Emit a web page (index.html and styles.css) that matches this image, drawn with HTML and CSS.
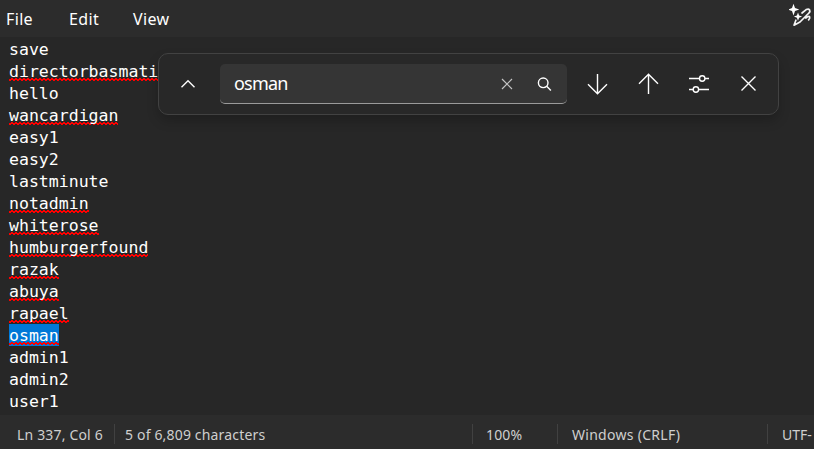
FILE: index.html
```html
<!DOCTYPE html>
<html lang="en">
<head>
<meta charset="utf-8">
<title>Notepad</title>
<link rel="stylesheet" href="styles.css">
</head>
<body>
<div class="window">
  <header class="menubar">
    <nav class="menus"><span class="menu file">File</span><span class="menu edit">Edit</span><span class="menu view">View</span></nav>
    <svg class="rewrite" width="24" height="28" viewBox="0 0 24 28" fill="none" stroke="#f4f4f4" stroke-width="1.7" stroke-linecap="round" stroke-linejoin="round">
      <path fill="#fff" stroke="none" d="M4.500 3.800l1.500 4.300 4.300 1.500-4.300 1.500-1.500 4.300-1.500-4.300-4.300-1.500 4.300-1.500zM9 12.500l1.100 3 3 1.100-3 1.100-1.100 3-1.100-3-3-1.100 3-1.100z"/>
      <path d="M13 13L17.200 9.600q2.400-1.100 3.400.3.900 1.700-.7 3.100L11 22l-6 3.200 1.900-5M16.800 18q3-2.200 3.800-1.300.7 1.200-1 3.200"/>
    </svg>
  </header>
  <main class="editor">
    <div class="line"><span>save</span></div>
    <div class="line"><span class="typo">directorbasmati</span></div>
    <div class="line"><span>hello</span></div>
    <div class="line"><span class="typo">wancardigan</span></div>
    <div class="line"><span>easy1</span></div>
    <div class="line"><span>easy2</span></div>
    <div class="line"><span>lastminute</span></div>
    <div class="line"><span class="typo">notadmin</span></div>
    <div class="line"><span class="typo">whiterose</span></div>
    <div class="line"><span class="typo">humburgerfound</span></div>
    <div class="line"><span class="typo">razak</span></div>
    <div class="line"><span class="typo">abuya</span></div>
    <div class="line"><span class="typo">rapael</span></div>
    <div class="line"><span class="typo selected">osman</span></div>
    <div class="line"><span>admin1</span></div>
    <div class="line"><span>admin2</span></div>
    <div class="line"><span>user1</span></div>
  </main>
  <footer class="statusbar">
    <div class="cell position">Ln 337, Col 6</div>
    <div class="cell count">5 of 6,809 characters</div>
    <div class="cell zoom">100%</div>
    <div class="cell eol">Windows (CRLF)</div>
    <div class="cell encoding">UTF-</div>
  </footer>
  <section class="find">
    <svg class="icon toggle" width="28" height="28" viewBox="0 0 28 28"><path d="M7.500 17.200L14 10.700l6.500 6.500"/></svg>
    <div class="field">
      <span class="query">osman</span>
      <svg class="icon clear" width="20" height="20" viewBox="0 0 20 20"><path d="M5 5l10 10M15 5L5 15"/></svg>
      <svg class="icon search" width="20" height="20" viewBox="0 0 20 20"><circle cx="9.200" cy="8.800" r="4.800"/><path d="M12.700 12.300l4.200 4.200"/></svg>
    </div>
    <svg class="icon down" width="28" height="28" viewBox="0 0 28 28"><path d="M13.500 4v19.500M4 14.200l9.500 9.500 9.500-9.500"/></svg>
    <svg class="icon up" width="28" height="28" viewBox="0 0 28 28"><path d="M13.500 24V4.500M4 13.800l9.500-9.500 9.500 9.500"/></svg>
    <svg class="icon options" width="28" height="28" viewBox="0 0 28 28"><path d="M4 8.500h10.300M20 8.500h4M4 19.500h4M13.800 19.500H24"/><circle cx="17.200" cy="8.500" r="2.700"/><circle cx="10.900" cy="19.500" r="2.700"/></svg>
    <svg class="icon close" width="28" height="28" viewBox="0 0 28 28"><path d="M7.500 6.500l14 14M21.500 6.500l-14 14"/></svg>
  </section>
</div>
</body>
</html>
```
FILE: styles.css
```css
* { box-sizing: border-box; }
body { margin: 0; background: #272727; color: #fff; font-family: "Noto Sans", "Open Sans", sans-serif; }
.window { position: relative; display: flex; flex-direction: column; width: 814px; height: 449px; overflow: hidden; }
.menubar { display: flex; justify-content: space-between; height: 37px; flex: none; background: #2c2c2c; }
.menus { display: flex; padding-left: 6px; }
.menu { font-size: 16px; line-height: 38px; letter-spacing: .35px; white-space: nowrap; }
.file { width: 63px; }
.edit { width: 64px; }
.rewrite { margin-right: 1px; }
.editor { flex: 1; padding: 1px 0 0 9px; background: #272727; font-family: "DejaVu Sans Mono", monospace; font-size: 16.550px; }
.line { height: 22px; line-height: 24px; white-space: pre; }
.line span { display: block; width: max-content; height: 22px; }
.typo {
  background-image: linear-gradient(135deg, transparent 40%, #f00 40%, #f00 70%, transparent 70%), linear-gradient(45deg, transparent 40%, #f00 40%, #f00 70%, transparent 70%);
  background-size: 4px 3px;
  background-position: 0 18px, 2px 18px;
  background-repeat: repeat-x;
}
.selected { background-color: #0078d7; }
.statusbar { display: flex; align-items: center; height: 34px; flex: none; padding-top: 4px; background: #2c2c2c; color: #cfcfcf; font-size: 14px; }
.cell { height: 20px; line-height: 22px; letter-spacing: .17px; white-space: nowrap; border-right: 1px solid #414141; flex: none; }
.position { width: 115px; padding-left: 17px; }
.count { width: 358px; padding-left: 10px; }
.zoom { width: 85px; padding-left: 13px; }
.eol { width: 210px; padding-left: 14px; letter-spacing: .28px; }
.encoding { border: 0; padding-left: 14px; letter-spacing: 0; }
.find { position: absolute; left: 158px; top: 53px; width: 621px; height: 62px; display: flex; align-items: center; padding-left: 15px; background: #282828; border: 1px solid #424242; border-radius: 10px; box-shadow: 0 6px 12px rgba(0,0,0,.2); }
.icon { fill: none; stroke: #fff; stroke-width: 1.400; flex: none; }
.field { display: flex; align-items: center; width: 347px; height: 40px; margin: 0 17px 0 18px; padding-left: 14px; background: #353535; border-bottom: 1px solid #9a9a9a; border-radius: 5px; }
.query { flex: 1; margin-top: -2px; font-size: 18px; line-height: 36px; letter-spacing: -.8px; }
.clear { stroke: #c4c4c4; stroke-width: 1.200; margin-right: 17px; }
.search { margin-right: 13px; }
.down { margin-right: 23px; }
.up { margin-right: 22px; }
.options { margin-right: 21px; }
```
